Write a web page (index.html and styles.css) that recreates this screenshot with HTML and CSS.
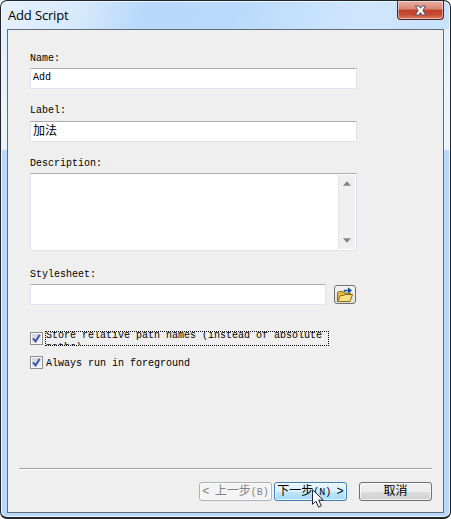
FILE: index.html
```html
<!DOCTYPE html>
<html lang="en">
<head>
<meta charset="utf-8">
<title>Add Script</title>
<link rel="stylesheet" href="styles.css">
</head>
<body>
<div class="window">
  <header class="titlebar">
    <h1 class="title">Add Script</h1>
    <button class="close" aria-label="Close">
      <svg width="13" height="11" viewBox="0 0 13 11"><path d="M1.500 1h3.200l1.800 2.200L8.300 1h3.200L8.900 5.500 11.700 10H8.300L6.500 7.700 4.700 10H1.300L4.100 5.500z" fill="#f7f7f7" stroke="#515565" stroke-width="1"/></svg>
    </button>
  </header>
  <main class="client">
    <form class="form">
      <label class="caption">Name:</label>
      <div class="field name">Add</div>
      <label class="caption">Label:</label>
      <div class="field cjk">加法</div>
      <label class="caption">Description:</label>
      <div class="area">
        <div class="scrollbar">
          <svg width="8" height="5" viewBox="0 0 9 5"><path d="M0 5L4.500 0 9 5z" fill="#858585"/></svg>
          <svg width="8" height="5" viewBox="0 0 9 5"><path d="M0 0h9L4.500 5z" fill="#858585"/></svg>
        </div>
      </div>
      <label class="caption">Stylesheet:</label>
      <div class="row">
        <div class="field sheet"></div>
        <button class="browse" type="button" aria-label="Browse">
          <svg width="18" height="16" viewBox="0 0 18 16">
            <path d="M1.500 14.500V5.500l1-1h4l1.500 1.500h6.500v2" fill="#e3b94c" stroke="#8a6a16"/>
            <path d="M1.500 14.500l3-6h3l1.500-1h7.500l-2.500 7z" fill="#f8df83" stroke="#8a6a16"/>
            <path d="M8.500 5V3.500h4" fill="none" stroke="#245a95" stroke-width="1.500"/>
            <path d="M12 .3L16 3.500 12 6.500z" fill="#134f8d"/>
          </svg>
        </button>
      </div>
      <div class="option first">
        <span class="box"><svg width="9" height="9" viewBox="0 0 9 9"><path d="M1 4.300l2.600 3L7.700.8" fill="none" stroke="#3a55a4" stroke-width="2"/></svg></span>
        <span class="focus">Store relative path names (instead of absolute paths)</span>
      </div>
      <div class="option">
        <span class="box"><svg width="9" height="9" viewBox="0 0 9 9"><path d="M1 4.300l2.600 3L7.700.8" fill="none" stroke="#3a55a4" stroke-width="2"/></svg></span>
        <span class="text">Always run in foreground</span>
      </div>
    </form>
    <footer class="footer">
      <button class="btn disabled">&lt; 上一步<i>(B)</i></button>
      <button class="btn next">下一步<i>(N)</i> &gt;</button>
      <button class="btn cancel">取消</button>
    </footer>
  </main>
  <svg class="cursor" width="13" height="20" viewBox="0 0 13 20"><path d="M.5.800v14.500l3.400-3.200 2.700 6 2.700-1.200-2.600-5.800h4.600z" fill="#fff" stroke="#242438"/></svg>
</div>
</body>
</html>
```
FILE: styles.css
```css
* { box-sizing: border-box; }
html, body { height: 100%; }
body {
  margin: 0;
  overflow: hidden;
  background: #fff;
  color: #000;
  font: 10px/12px "Liberation Mono", "Noto Sans CJK SC", monospace;
}
button { font: inherit; margin: 0; padding: 0; }
svg { display: block; }
.window {
  position: relative;
  height: 519px;
  padding: 0 6px 5px 6px;
  border: 1px solid #23252d;
  border-bottom-width: 2px;
  border-radius: 7px;
  background:
    linear-gradient(105deg, #e6f1fc 0, #d6e9fc 80px, #b8d9fb 140px, #b9dafb 230px, #d0e6fc 350px, #c8e2fc 100%) 0 0 / 100% 28px no-repeat,
    linear-gradient(#e0effd 0, #ecf5fd 148px, #b7d7fb 150px, #b7d7fb 100%);
  box-shadow: inset 0 0 0 1px #e9f6ff;
}
.titlebar { display: flex; justify-content: space-between; height: 28px; }
.title {
  margin: 5px 0 0 1px;
  font: 13px/18px "Open Sans", "Noto Sans", sans-serif;
  letter-spacing: -.15px;
}
.close {
  display: grid;
  place-items: center;
  width: 47px;
  height: 19px;
  border: 1px solid #53232a;
  border-top: 0;
  border-radius: 0 0 4px 4px;
  background: linear-gradient(#eab0a5 0, #d98675 45%, #c0402b 50%, #c64a32 75%, #dc8265 100%);
  box-shadow: inset 0 0 0 1px #ffffff70;
}
.client {
  display: flex;
  flex-direction: column;
  justify-content: space-between;
  height: 484px;
  padding: 23px 11px 10px;
  border: 1px solid #626c78;
  background: #efefef;
}
.form { width: 327px; margin-left: 11px; }
.caption { display: block; height: 12px; margin-bottom: 3px; }
.field {
  width: 327px;
  height: 21px;
  margin-bottom: 16px;
  padding: 3px 3px 0 2px;
  border: 1px solid #e2e3ea;
  border-top-color: #abadb3;
  background: #fff;
}
.cjk { margin-top: 4px; padding-top: 4px; font-size: 12px; }
.area {
  display: flex;
  justify-content: flex-end;
  height: 78px;
  margin-bottom: 18px;
  padding: 1px;
  border: 1px solid #e2e3ea;
  border-top-color: #abadb3;
  background: #fff;
}
.scrollbar {
  display: flex;
  flex-direction: column;
  justify-content: space-between;
  align-items: center;
  width: 17px;
  padding: 6px 0 6px;
  border-left: 1px solid #e3e3e3;
  background: #f0f0f0;
}
.row { display: flex; justify-content: space-between; height: 21px; }
.sheet { width: 296px; margin: 0; }
.browse {
  display: grid;
  place-items: center;
  width: 22px;
  height: 19px;
  margin: 1px 1px 0 0;
  border: 1px solid #707070;
  border-radius: 3px;
  background: linear-gradient(#f5f5f5, #dedede);
}
.option { display: flex; align-items: center; gap: 2px; height: 15px; margin-top: 9px; }
.first { margin-top: 26px; }
.box {
  display: grid;
  place-items: center;
  width: 13px;
  height: 13px;
  border: 1px solid #8e8f8f;
  background: linear-gradient(135deg, #cbd0d8, #f3f4f6);
  box-shadow: inset 0 0 0 1px #f7f7f7;
}
.focus {
  width: 284px;
  height: 15px;
  overflow: hidden;
  border: 1px dotted #000;
  line-height: 12px;
}
.focus::before { content: ""; display: block; margin-top: -2px; }
.text { padding: 2px 0 0 1px; }
.footer {
  display: flex;
  justify-content: flex-end;
  gap: 2px;
  height: 34px;
  padding-top: 13px;
  border-top: 1px solid #a0a0a0;
  box-shadow: inset 0 1px #fff;
}
.btn {
  width: 73px;
  height: 19px;
  padding-top: 2px;
  border: 1px solid #707070;
  border-radius: 3px;
  background: linear-gradient(#f2f2f2 0, #ebebeb 50%, #ddd 50%, #cfcfcf 100%);
  box-shadow: inset 0 0 0 1px #ffffffb0;
  color: #000;
  font: 12px/15px "Liberation Mono", "Noto Sans CJK SC", monospace;
  white-space: nowrap;
}
.btn i { font-size: 10px; font-style: normal; }
.disabled { border-color: #adb2b5; background: #f4f4f4; color: #838383; word-spacing: -2px; }
.next {
  border-color: #3c7fb1;
  background: linear-gradient(#eaf6fd 0, #d9f0fc 50%, #bee6fd 50%, #a7d9f5 100%);
  word-spacing: -2px;
}
.cancel { margin-left: 10px; }
.cursor { position: absolute; left: 311px; top: 488px; }
```
